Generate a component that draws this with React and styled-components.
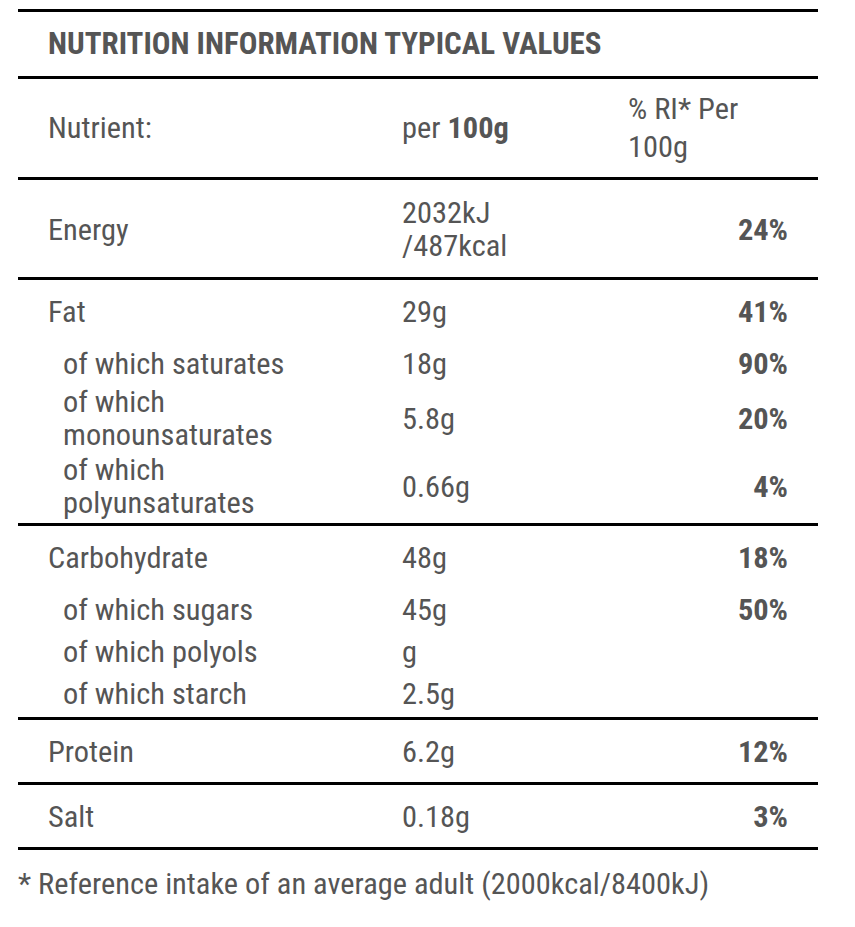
import React from 'react'
import styled, { createGlobalStyle } from 'styled-components'

const GlobalStyle = createGlobalStyle`
  body {
    margin: 0;
    background: #fff;
    font-family: 'Roboto Condensed', Roboto, sans-serif;
    font-stretch: condensed;
    color: #555;
  }
`

const rows = [
  {
    group: [
      { name: 'Energy', value: ['2032kJ', '/487kcal'], ri: '24%', tall: true },
    ],
  },
  {
    group: [
      { name: 'Fat', value: '29g', ri: '41%' },
      { name: 'of which saturates', value: '18g', ri: '90%', sub: true },
      { name: ['of which', 'monounsaturates'], value: '5.8g', ri: '20%', sub: true },
      { name: ['of which', 'polyunsaturates'], value: '0.66g', ri: '4%', sub: true },
    ],
  },
  {
    group: [
      { name: 'Carbohydrate', value: '48g', ri: '18%' },
      { name: 'of which sugars', value: '45g', ri: '50%', sub: true },
      { name: 'of which polyols', value: 'g', sub: true },
      { name: 'of which starch', value: '2.5g', sub: true },
    ],
  },
  { group: [{ name: 'Protein', value: '6.2g', ri: '12%' }] },
  { group: [{ name: 'Salt', value: '0.18g', ri: '3%' }] },
]

const Page = styled.div`
  padding: 9px 37px 40px 18px;
`

const Table = styled.div`
  width: 800px;
  border-top: 3px solid #000;
`

const Title = styled.h2`
  margin: 0;
  padding: 11px 30px;
  line-height: 42px;
  font-size: 31px;
  font-weight: 700;
  text-transform: uppercase;
  border-bottom: 3px solid #000;
`

const Group = styled.div`
  padding-bottom: ${p => (p.$nested ? '3px' : '0')};
  border-bottom: 3px solid #000;
`

const Row = styled.div`
  display: grid;
  grid-template-columns: 354px 226px 160px;
  align-items: center;
  padding: ${p => (p.$tall ? '16px 30px 15px' : p.$sub ? '1px 30px' : '10px 30px')};
  min-height: ${p => (p.$sub ? '40px' : '42px')};
  font-size: 30.4px;
  line-height: 33px;
`

const HeadRow = styled(Row)`
  padding: 11px 30px;
  line-height: 38px;
`

const Name = styled.div`
  padding-left: ${p => (p.$sub ? '15px' : '0')};
`

const Value = styled.div``

const Percent = styled.div`
  text-align: right;
  font-weight: 700;
`

const Footnote = styled.p`
  margin: 17px 0 0;
  font-size: 30.4px;
  line-height: 33px;
`

const lines = v => (Array.isArray(v) ? v.map(l => <div key={l}>{l}</div>) : v)

const NutritionTable = () => {
  return (
    <Page>
      <Table>
        <Title>Nutrition Information Typical Values</Title>
        <Group>
          <HeadRow>
            <Name>Nutrient:</Name>
            <Value>per <b>100g</b></Value>
            <div>% RI* Per<br />100g</div>
          </HeadRow>
        </Group>
        {rows.map((r, i) => (
          <Group key={i} $nested={r.group.length > 1}>
            {r.group.map((item, j) => (
              <Row key={j} $sub={item.sub} $tall={item.tall}>
                <Name $sub={item.sub}>{lines(item.name)}</Name>
                <Value>{lines(item.value)}</Value>
                <Percent>{item.ri}</Percent>
              </Row>
            ))}
          </Group>
        ))}
      </Table>
      <Footnote>* Reference intake of an average adult (2000kcal/8400kJ)</Footnote>
    </Page>
  )
}

export default function App() {
  return (
    <>
      <GlobalStyle />
      <NutritionTable />
    </>
  )
}
